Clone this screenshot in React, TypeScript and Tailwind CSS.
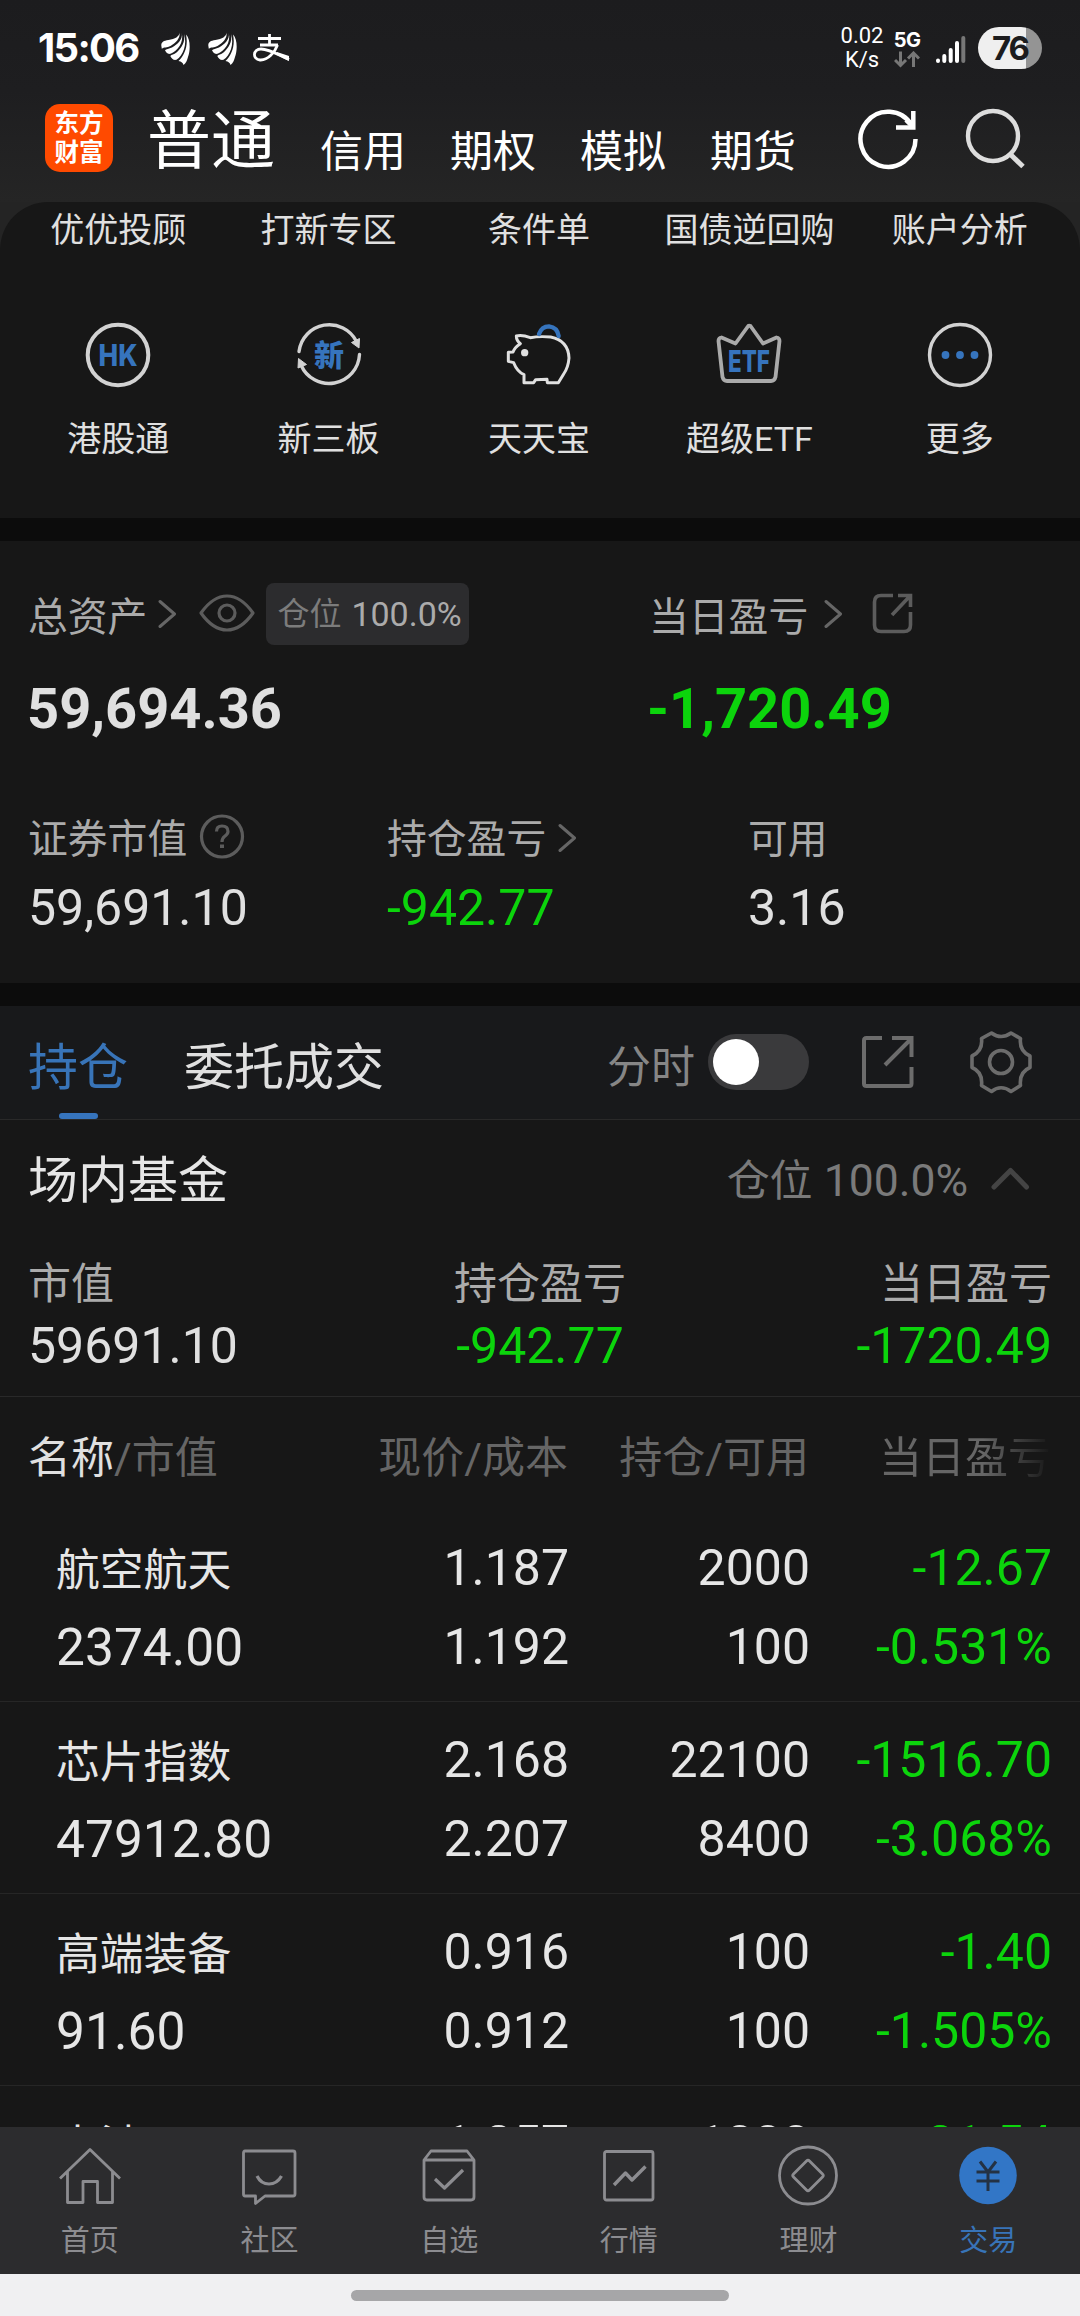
import React from "react";

const GREEN = "text-[#0cd40c]";

function Chevron({ className = "" }: { className?: string }) {
  return (
    <svg className={`shrink-0 ${className}`} width="19" height="30" viewBox="0 0 19 30" fill="none" stroke="#666" strokeWidth="3" strokeLinecap="round" strokeLinejoin="round">
      <path d="M2 2.5 L16.5 15 L2 27.5" />
    </svg>
  );
}

function FlameMark({ className = "" }: { className?: string }) {
  return (
    <svg className={className} width="29" height="33" viewBox="0 0 29 33" fill="#fff">
      <path d="M18.500 0.500 C18.500 4.500 14 7 7.500 8 C2.500 8.700 0.300 10 0.300 13.500 L0.800 16.800 C3 14.800 6 16 9.500 14 C14.500 11 19.500 6.500 18.500 0.500Z" />
      <path d="M20.800 0.800 C22 7.500 16.500 12.500 11 15.500 C8 17 5 16.800 4 18.300 C5 20.500 6.500 22.500 9.500 21.800 C16.500 19 23 11 20.800 0.800Z" />
      <path d="M23 2 C24.500 10 20.500 16 15.500 20.500 C13 22.500 10.500 22.500 9.300 24 C10.500 26.500 12.500 28.500 15.500 27.800 C22 24 26.500 12 23 2Z" />
      <path d="M25 2.500 C29.500 7 29.500 18 27 25 C26 28.500 25 31.500 22.500 33 C22 31 20.500 29.500 17.500 29 C23.500 23.500 27.500 14 25 2.500Z" />
    </svg>
  );
}

function StatusBar() {
  return (
    <div className="flex h-[96px] shrink-0 items-center pl-[38px] pr-[38px]">
      <span className="w-[123px] whitespace-nowrap font-[Inter] text-[40px] font-bold leading-[40px] tracking-[-1.7px] text-white">15:06</span>
      <FlameMark />
      <FlameMark className="ml-[18px]" />
      <svg className="ml-[16px]" width="37" height="28" viewBox="0 0 37 28" fill="none" stroke="#fff" strokeWidth="2.800">
        <path d="M5 4.500 H28 M16.500 0 V11 M7 11 H25" />
        <path d="M24.500 11 C22 18 15 26.500 7 26 C-1 25 0 15 8 15 C16 15 24 20 36 25.500" />
        <path d="M24 18 L36 22 L36 27 L24 21Z" fill="#fff" stroke="none" />
      </svg>
      <div className="flex-1" />
      <div className="flex w-[44px] flex-col items-center font-[Roboto] text-[22px] leading-[24px] text-white">
        <span>0.02</span>
        <span>K/s</span>
      </div>
      <div className="ml-[9px] flex w-[28px] flex-col items-center pt-[2px]">
        <span className="font-[Inter] text-[20px] font-bold leading-[20px] tracking-[-0.6px] text-white">5G</span>
        <svg className="mt-[1px]" width="26" height="17" viewBox="0 0 26 17" fill="none" stroke="#777" strokeWidth="3">
          <path d="M6.500 0.500 V14 M1 9 L6.500 14.500 L12 9 M19.500 16 V2.500 M14 7.500 L19.500 2 L25 7.500" />
        </svg>
      </div>
      <svg className="ml-[13px]" width="32" height="34" viewBox="0 0 32 34" strokeWidth="4" strokeLinecap="round" fill="none">
        <path d="M4 29.500 V30 M10.300 25 V30 M16.700 19 V30 M23 12 V30" stroke="#fff" />
        <path d="M29.300 7 V30" stroke="#777" />
      </svg>
      <div className="ml-[12px] flex h-[42px] w-[64px] items-center justify-center overflow-hidden rounded-full bg-[linear-gradient(to_right,#efefef_75%,#949494_75%)] font-[Inter] text-[33px] font-bold leading-[42px] tracking-[-2px] text-[#1c1c1e]">
        76
      </div>
    </div>
  );
}

function Header() {
  return (
    <div className="flex h-[106px] shrink-0 items-start pl-[45px]">
      <div className="mt-[8px] flex h-[68px] w-[68px] flex-col items-center rounded-[15px] bg-[#ff4a00] pt-[5px] text-[24.500px] font-bold leading-[29px] text-white">
        <span>东方</span>
        <span>财富</span>
      </div>
      <span className="ml-[34px] mt-[9px] w-[130px] text-[64px] leading-[74px] text-white">普通</span>
      <div className="ml-[43px] flex gap-[44px] pt-[30px] text-[43px] leading-[52px] text-white">
        <span>信用</span>
        <span>期权</span>
        <span>模拟</span>
        <span>期货</span>
      </div>
      <svg className="ml-[60px] mt-[11px]" width="64" height="64" viewBox="0 0 64 64" fill="none" stroke="#fff" strokeWidth="4.500">
        <path d="M55.500 18 A27.500 27.500 0 1 0 59.500 32" />
        <path d="M57.300 4 V20.500 H40" />
        <path d="M50 13 L57 20" />
      </svg>
      <svg className="ml-[43px] mt-[10px]" width="64" height="64" viewBox="0 0 64 64" fill="none" stroke="#ddd" strokeWidth="4.400">
        <circle cx="30" cy="30" r="25" />
        <path d="M47 48 L60 60.500" strokeWidth="5" />
      </svg>
    </div>
  );
}

function HkIcon() {
  return (
    <svg width="70" height="70" viewBox="0 0 70 70">
      <circle cx="35" cy="35" r="30.300" fill="none" stroke="#d2d2d2" strokeWidth="4" />
      <text x="15.500" y="46" textLength="39" lengthAdjust="spacingAndGlyphs" fontFamily="Inter" fontWeight="800" fontSize="30" fill="#3674bd">HK</text>
    </svg>
  );
}

function XinIcon() {
  return (
    <svg width="70" height="70" viewBox="0 0 70 70">
      <g fill="none" stroke="#d2d2d2" strokeWidth="3.400" strokeLinecap="round">
        <path d="M5 31.500 A30.500 30.500 0 0 1 62.500 21.500" />
        <path d="M65.500 34.500 A30.500 30.500 0 0 1 7 45" />
      </g>
      <path d="M57.500 22.500 L65.500 18.500 L65 28Z M12.500 44.500 L4 48 L4.500 38.500Z" fill="#d2d2d2" stroke="#d2d2d2" strokeLinejoin="round" />
      <text x="20" y="46" fontFamily="Noto Sans CJK SC" fontWeight="900" fontSize="30" fill="#3674bd">新</text>
    </svg>
  );
}

function PigIcon() {
  return (
    <svg width="70" height="70" viewBox="45 26 210 210" fill="none">
      <path d="M82 74 Q98 69 124 79 Q150 74 185 77 Q238 88 240 140 Q238 168 224 188 L208 214 L175 214 L174 204 L140 205 L134 214 L105 214 L105 190 Q84 180 74 154 L58 150 L58 123 L72 122 Q77 108 94 97 Q82 88 82 74Z" stroke="#e0e0e0" strokeWidth="9" strokeLinejoin="round" />
      <circle cx="107" cy="124" r="11" fill="#e0e0e0" />
      <path d="M150 68 Q158 45 180 45 Q205 48 209 74" stroke="#3674bd" strokeWidth="13" strokeLinecap="round" />
    </svg>
  );
}

function EtfIcon() {
  return (
    <svg width="70" height="70" viewBox="0 0 70 70">
      <path d="M36.500 6 Q34.500 5 33.500 7 L21.500 23.500 L7.500 17.500 Q4.500 18 4.500 21 L8.500 57 Q9.500 61 13 61 H57 Q60.500 61 61.500 57 L65.500 21 Q65.500 18 62.500 17.500 L49 23.500 L36.500 6Z" fill="none" stroke="#aaa" strokeWidth="3.800" strokeLinejoin="round" />
      <text x="14" y="51.500" textLength="42" lengthAdjust="spacingAndGlyphs" fontFamily="Inter" fontWeight="800" fontSize="30" fill="#3674bd">ETF</text>
    </svg>
  );
}

function MoreIcon() {
  return (
    <svg width="70" height="70" viewBox="0 0 70 70">
      <circle cx="35" cy="35" r="30.500" fill="none" stroke="#d2d2d2" strokeWidth="3.400" />
      <g fill="#3674bd">
        <circle cx="20.500" cy="35" r="3.900" />
        <circle cx="35" cy="35" r="3.900" />
        <circle cx="49.500" cy="35" r="3.900" />
      </g>
    </svg>
  );
}

const topShortcuts = ["优优投顾", "打新专区", "条件单", "国债逆回购", "账户分析"];
const shortcuts = [
  { label: "港股通", icon: <HkIcon /> },
  { label: "新三板", icon: <XinIcon /> },
  { label: "天天宝", icon: <PigIcon /> },
  { label: "超级ETF", icon: <EtfIcon /> },
  { label: "更多", icon: <MoreIcon /> },
];

function Shortcuts() {
  return (
    <div className="shrink-0 bg-[#242424]">
      <div className="h-[316px] rounded-t-[48px] bg-[#171717] pl-[13px] pr-[15px] text-[34px] text-[#e0e0e0]">
        <div className="grid grid-cols-5 pt-[3px]">
          {topShortcuts.map((t) => (
            <span key={t} className="whitespace-nowrap text-center leading-[50px]">{t}</span>
          ))}
        </div>
        <div className="mt-[65px] grid grid-cols-5">
          {shortcuts.map((s) => (
            <div key={s.label} className="flex flex-col items-center">
              {s.icon}
              <span className="mt-[24px] whitespace-nowrap leading-[50px]">{s.label}</span>
            </div>
          ))}
        </div>
      </div>
    </div>
  );
}

function Divider() {
  return <div className="h-[23px] shrink-0 bg-[#0c0c0c]" />;
}

function Assets() {
  return (
    <div className="h-[442px] shrink-0 bg-[#171717] text-[39.800px] text-[#ababab]">
      <div className="mt-[42px] flex h-[62px] pl-[28px]">
        <div className="flex w-[621px] items-center">
          <span className="pt-[8px] leading-[56px]">总资产</span>
          <Chevron className="ml-[11px]" />
          <svg className="ml-[22px]" width="56" height="40" viewBox="0 0 56 40" fill="none" stroke="#5c5c5c" strokeWidth="3.200">
            <path d="M2 19 Q14 2 28 2 Q42 2 54 19 Q42 36 28 36 Q14 36 2 19Z" strokeLinejoin="round" />
            <circle cx="28" cy="19" r="8" />
          </svg>
          <div className="ml-[11px] flex h-[62px] w-[203px] items-center rounded-[8px] bg-[#2c2c2e] pl-[11px]">
            <span className="text-[32px] leading-[62px] text-[#7c7c7c]">仓位</span>
            <span className="ml-[10px] text-[34px] leading-[62px]">100.0%</span>
          </div>
        </div>
        <div className="flex items-center">
          <span className="pt-[8px] leading-[56px]">当日盈亏</span>
          <Chevron className="ml-[16px]" />
          <svg className="ml-[28px]" width="44" height="44" viewBox="0 0 44 44" fill="none" stroke="#5c5c5c" strokeWidth="3.600">
            <path d="M22 3.500 H10 Q3.500 3.500 3.500 10 V33 Q3.500 39.500 10 39.500 H33 Q39.500 39.500 39.500 33 V20" />
            <path d="M27 3.500 H39.500 V15 M39 4 L21 23" />
          </svg>
        </div>
      </div>
      <div className="mt-[34px] flex pl-[27px] text-[56px] font-bold leading-[60px]">
        <span className="w-[620px] text-[#e0e0e0]">59,694.36</span>
        <span className={GREEN}>-1,720.49</span>
      </div>
      <div className="mt-[69px] flex pl-[28px]">
        <div className="w-[359px]">
          <div className="flex h-[60px] items-center">
            <span className="pt-[4px] leading-[60px]">证券市值</span>
            <svg className="ml-[12px]" width="46" height="50" viewBox="0 0 46 50" fill="none" stroke="#5c5c5c" strokeWidth="3.200">
              <circle cx="23" cy="23.500" r="20.500" />
              <path d="M17.500 18.500 Q17.500 13 23 13 Q29 13 29 18.500 Q29 21 25.500 23.500 Q23 25.500 23 29" />
              <path d="M23 31.500 V35" strokeWidth="4" />
            </svg>
          </div>
          <div className="mt-[10px] text-[50px] leading-[60px] text-[#e0e0e0]">59,691.10</div>
        </div>
        <div className="w-[361px]">
          <div className="flex h-[60px] items-center">
            <span className="pt-[4px] leading-[60px]">持仓盈亏</span>
            <Chevron className="ml-[12px]" />
          </div>
          <div className={`mt-[10px] text-[50px] leading-[60px] ${GREEN}`}>-942.77</div>
        </div>
        <div>
          <div className="flex h-[60px] items-center">
            <span className="pt-[4px] leading-[60px]">可用</span>
          </div>
          <div className="mt-[10px] text-[50px] leading-[60px] text-[#e0e0e0]">3.16</div>
        </div>
      </div>
    </div>
  );
}

function Tabs() {
  return (
    <div className="flex h-[114px] shrink-0 items-start border-b border-[#292929] bg-[#18191b] pl-[28px] text-[50px]">
      <div className="flex h-[113px] w-[100px] flex-col items-center text-[#3874b8]">
        <span className="mt-[27px] whitespace-nowrap leading-[70px]">持仓</span>
        <span className="mt-auto h-[6px] w-[39px] rounded-full bg-[#3674bd]" />
      </div>
      <span className="ml-[56px] mt-[27px] w-[423px] leading-[70px] text-[#e0e0e0]">委托成交</span>
      <span className="mt-[30px] text-[44px] leading-[64px] text-[#868686]">分时</span>
      <div className="ml-[13px] mt-[28px] flex h-[56px] w-[101px] items-center rounded-full bg-[#3a3a3c] pl-[5px]">
        <span className="h-[46px] w-[46px] rounded-full bg-white" />
      </div>
      <svg className="ml-[51px] mt-[28px]" width="56" height="56" viewBox="0 0 56 56" fill="none" stroke="#6c6c6c" strokeWidth="4">
        <path d="M22 4 H6.500 Q4 4 4 6.500 V49.500 Q4 52 6.500 52 H49 Q51.500 52 51.500 49.500 V33" />
        <path d="M32 4 H51.500 V23 M51 5 L25 31" />
      </svg>
      <svg className="ml-[52px] mt-[24px]" width="66" height="66" viewBox="0 0 66 66" fill="none" stroke="#6c6c6c" strokeWidth="3.600" strokeLinejoin="round">
        <path d="M23.500 3 Q33 10 43 3 L52.500 8.500 Q51 21 62 26 V37.500 Q51 42 52.500 55.500 L43 61.500 Q33 54 23.500 61.500 L13.500 55.500 Q15 42 4 37.500 V26 Q15 21 13.500 8.500Z" />
        <circle cx="33" cy="32" r="11.500" />
      </svg>
    </div>
  );
}

function FundSummary() {
  return (
    <div className="h-[277px] shrink-0 border-b border-[#292929] bg-[#171717] pl-[28px] pr-[28px]">
      <div className="flex h-[122px] items-center">
        <span className="flex-1 text-[50px] leading-[70px] text-[#e6e6e6]">场内基金</span>
        <span className="text-[43px] leading-[70px] text-[#7a7a7a]">仓位</span>
        <span className="ml-[11px] text-[44.500px] leading-[70px] text-[#7a7a7a]">100.0%</span>
        <svg className="ml-[22px] mr-[22px] mt-[-4px]" width="40" height="24" viewBox="0 0 40 24" fill="none" stroke="#444" strokeWidth="5" strokeLinecap="round" strokeLinejoin="round">
          <path d="M4 20 L20.500 3.500 L36.500 20" />
        </svg>
      </div>
      <div className="grid grid-cols-3 pt-[12px] text-[43px] leading-[60px] text-[#ababab]">
        <span>市值</span>
        <span className="text-center">持仓盈亏</span>
        <span className="text-right">当日盈亏</span>
      </div>
      <div className="grid grid-cols-3 pt-[2px] text-[50px] leading-[60px]">
        <span className="text-[#e0e0e0]">59691.10</span>
        <span className={`text-center ${GREEN}`}>-942.77</span>
        <span className={`text-right ${GREEN}`}>-1720.49</span>
      </div>
    </div>
  );
}

type Holding = {
  name: string;
  price: string;
  qty: string;
  pnl: string;
  detail?: { value: string; cost: string; avail: string; pct: string };
};

const holdings: Holding[] = [
  { name: "航空航天", price: "1.187", qty: "2000", pnl: "-12.67", detail: { value: "2374.00", cost: "1.192", avail: "100", pct: "-0.531%" } },
  { name: "芯片指数", price: "2.168", qty: "22100", pnl: "-1516.70", detail: { value: "47912.80", cost: "2.207", avail: "8400", pct: "-3.068%" } },
  { name: "高端装备", price: "0.916", qty: "100", pnl: "-1.40", detail: { value: "91.60", cost: "0.912", avail: "100", pct: "-1.505%" } },
  { name: "电池", price: "1.257", qty: "1000", pnl: "-21.54" },
];

function Holdings() {
  return (
    <div className="flex min-h-0 flex-1 flex-col overflow-hidden bg-[#171717]">
      <div className="grid h-[113px] shrink-0 grid-cols-[540px_241px_242px] pl-[28px] pt-[26px] text-[43px] leading-[70px] text-[#666]">
        <div className="flex justify-between">
          <span><span className="text-[#e0e0e0]">名称</span>/市值</span>
          <span>现价/成本</span>
        </div>
        <span className="text-right">持仓/可用</span>
        <span className="bg-[linear-gradient(to_right,#666_72%,#171717_100%)] bg-clip-text text-right text-transparent">当日盈亏</span>
      </div>
      {holdings.map((h) => (
        <div key={h.name} className="grid h-[192px] shrink-0 grid-cols-[513px_241px_242px] content-start border-b border-[#262626] pl-[56px] pt-[19px] text-[50px] leading-[79px] text-[#e6e6e6]">
          <div className="flex h-[79px] justify-between">
            <span className="pt-[3px] text-[43.800px] leading-[79px]">{h.name}</span>
            <span>{h.price}</span>
          </div>
          <span className="text-right">{h.qty}</span>
          <span className={`text-right ${GREEN}`}>{h.pnl}</span>
          {h.detail && (
            <>
              <div className="flex h-[79px] justify-between">
                <span className="text-[51.500px] leading-[79px]">{h.detail.value}</span>
                <span>{h.detail.cost}</span>
              </div>
              <span className="text-right">{h.detail.avail}</span>
              <span className={`text-right ${GREEN}`}>{h.detail.pct}</span>
            </>
          )}
        </div>
      ))}
    </div>
  );
}

const navStroke = { fill: "none", stroke: "#8c8c90", strokeWidth: 2.8, strokeLinejoin: "round" as const };

const nav = [
  {
    label: "首页",
    icon: (
      <svg width="64" height="64" viewBox="0 0 64 64" {...navStroke}>
        <path d="M2 34.500 L32 5.500 L62 34.500 M9.500 28 V58.500 H25 V37.500 H39.500 V58.500 H54.500 V28" />
      </svg>
    ),
  },
  {
    label: "社区",
    icon: (
      <svg width="64" height="64" viewBox="0 0 64 64" {...navStroke}>
        <path d="M8 7 H56 Q58 7 58 9 V50 Q58 52 56 52 H28 L18.500 59.500 V52 H8 Q6.500 52 6.500 50 V9 Q6.500 7 8 7Z" />
        <path d="M20 32 Q24 40 32 40 Q40 40 44.500 32" strokeWidth="3.200" />
      </svg>
    ),
  },
  {
    label: "自选",
    icon: (
      <svg width="64" height="64" viewBox="0 0 64 64" {...navStroke}>
        <path d="M7 16 V53 Q7 56 10 56 H54 Q57 56 57 53 V16 M7 16 L14 7 H50 L57 16Z" />
        <path d="M18 35 L27.500 44 L46 26" strokeWidth="3.200" />
      </svg>
    ),
  },
  {
    label: "行情",
    icon: (
      <svg width="64" height="64" viewBox="0 0 64 64" {...navStroke}>
        <rect x="7.500" y="7.500" width="48.500" height="48.500" rx="2" />
        <path d="M17 41 L28.500 29 L35 36 L48.500 22.500" strokeWidth="3.400" />
      </svg>
    ),
  },
  {
    label: "理财",
    icon: (
      <svg width="64" height="64" viewBox="0 0 64 64" {...navStroke}>
        <circle cx="32" cy="31.500" r="28.500" />
        <path d="M30.500 17 Q32 15.500 33.500 17 L46.500 30 Q48 31.500 46.500 33 L33.500 46 Q32 47.500 30.500 46 L17.500 33 Q16 31.500 17.500 30Z" />
      </svg>
    ),
  },
  {
    label: "交易",
    active: true,
    icon: (
      <svg width="64" height="64" viewBox="0 0 64 64">
        <circle cx="32" cy="31.500" r="28.800" fill="#3276c6" />
        <path d="M24 17.500 L32 28 L40 17.500 M20.500 28 H43.500 M20.500 37 H43.500 M32 28 V47" fill="none" stroke="#243244" strokeWidth="3" />
      </svg>
    ),
  },
];

export default function App() {
  return (
    <div className="flex h-[2316px] w-[1080px] flex-col overflow-hidden bg-[#171717] font-[Roboto,'Noto_Sans_CJK_SC',sans-serif]">
      <div className="shrink-0 bg-[linear-gradient(to_bottom,#1c1c1e_0%,#1e1e20_45%,#252525_100%)]">
        <StatusBar />
        <Header />
      </div>
      <Shortcuts />
      <Divider />
      <Assets />
      <Divider />
      <Tabs />
      <FundSummary />
      <Holdings />
      <nav className="grid h-[147px] shrink-0 grid-cols-6 bg-[#2c2c2e] pr-[2px]">
        {nav.map((n) => (
          <div key={n.label} className="flex flex-col items-center pt-[17px]">
            {n.icon}
            <span className={`mt-[12px] text-[29px] leading-[42px] ${n.active ? "text-[#3874b8]" : "text-[#8c8c90]"}`}>{n.label}</span>
          </div>
        ))}
      </nav>
      <div className="flex h-[42px] shrink-0 justify-center bg-[#f0f0f2] pt-[16px]">
        <div className="h-[11px] w-[378px] rounded-full bg-[#a6a6a8]" />
      </div>
    </div>
  );
}
